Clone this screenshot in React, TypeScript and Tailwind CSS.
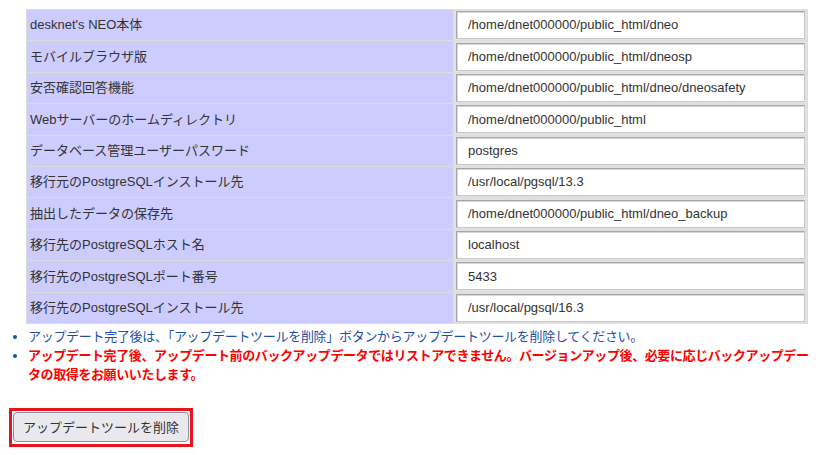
import React from 'react';

const rows: [string, string][] = [
  ["desknet's NEO本体", '/home/dnet000000/public_html/dneo'],
  ['モバイルブラウザ版', '/home/dnet000000/public_html/dneosp'],
  ['安否確認回答機能', '/home/dnet000000/public_html/dneo/dneosafety'],
  ['Webサーバーのホームディレクトリ', '/home/dnet000000/public_html'],
  ['データベース管理ユーザーパスワード', 'postgres'],
  ['移行元のPostgreSQLインストール先', '/usr/local/pgsql/13.3'],
  ['抽出したデータの保存先', '/home/dnet000000/public_html/dneo_backup'],
  ['移行先のPostgreSQLホスト名', 'localhost'],
  ['移行先のPostgreSQLポート番号', '5433'],
  ['移行先のPostgreSQLインストール先', '/usr/local/pgsql/16.3'],
];

export default function App() {
  return (
    <div className="bg-white w-[816px] h-[455px] overflow-hidden text-[13px] text-[#333]" style={{ fontFamily: '"Liberation Sans", Arial, "Noto Sans CJK JP", sans-serif' }}>
      <div className="pt-[9px] pl-[26px]">
        <table className="w-[782px] border-separate border-spacing-[1px] bg-[#dcdcdc]">
          <tbody>
            {rows.map(([label, value]) => (
              <tr key={label}>
                <td className="bg-[#ccccff] w-[426px] h-[30.4px] pl-[3px] align-middle">{label}</td>
                <td className="bg-[#e2e2e2] px-[2px] py-[1px] align-middle">
                  <div className="h-[28px] bg-white border border-[#a6a6a6] border-b-[#c8c8c8] border-r-[#c8c8c8] shadow-[inset_1px_1px_0_#d8d8d8] pl-[11px] flex items-center">{value}</div>
                </td>
              </tr>
            ))}
          </tbody>
        </table>
      </div>
      <ul className="mt-[3px] pl-[28px] pr-[3px] list-disc marker:text-[#1f4fa8] text-[13px] leading-[19px]">
        <li className="text-[#1f4fa8] tracking-[-0.3px]">アップデート完了後は、「アップデートツールを削除」ボタンからアップデートツールを削除してください。</li>
        <li className="text-[#ff0000] font-bold tracking-[-0.4px]">アップデート完了後、アップデート前のバックアップデータではリストアできません。バージョンアップ後、必要に応じバックアップデー<br />タの取得をお願いいたします。</li>
      </ul>
      <div className="mt-[24px] ml-[9px] w-[184px] h-[39px] border-[3px] border-[#e8141e] flex items-center justify-center">
        <button className="w-[176px] h-[30px] bg-[#e9e9ed] border border-[#8f8f9d] rounded-[4px] text-[13px] text-[#333]">アップデートツールを削除</button>
      </div>
    </div>
  );
}
